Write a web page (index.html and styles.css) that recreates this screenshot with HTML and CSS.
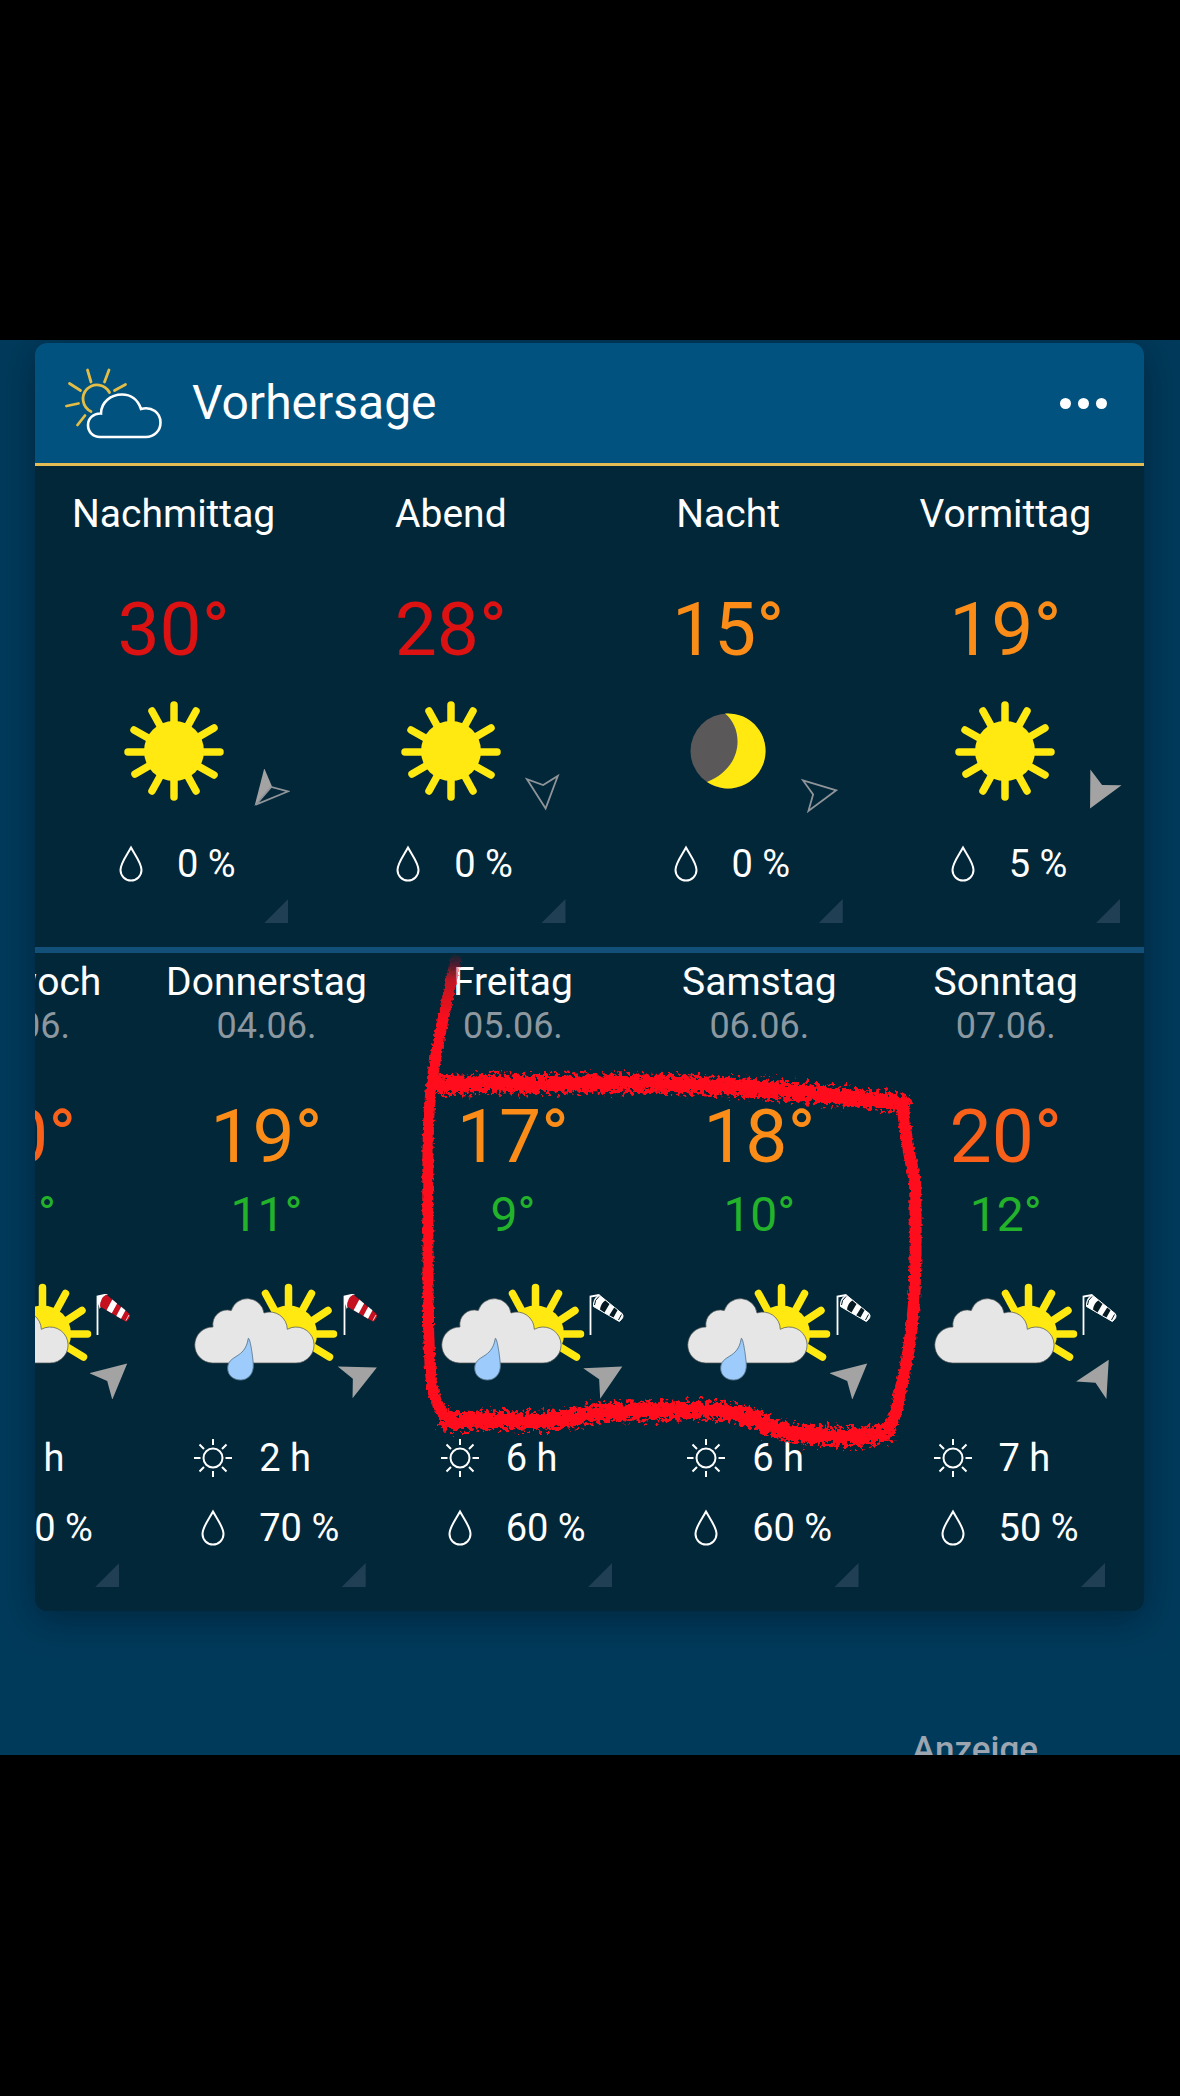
FILE: index.html
```
<!DOCTYPE html>
<html lang="de">
<head>
    <meta charset="UTF-8">
    <meta name="viewport" content="width=device-width, initial-scale=1.0">
    <title>Vorhersage</title>
    <link rel="stylesheet" href="styles.css">
</head>
<body>
    <!-- Symbole -->
    <svg class="sprite" aria-hidden="true">
        <symbol id="sun" viewBox="0 0 100 100">
            <circle cx="50" cy="50" r="30" fill="#ffe911"/>
            <g stroke="#ffe911" stroke-width="7.5" stroke-linecap="round">
                <path d="M50 4V96M4 51H96M28 10L72 90M72 10L28 90M10 29L90 74M90 27L11 73"/>
            </g>
        </symbol>
        <symbol id="moon" viewBox="0 0 100 100">
            <circle cx="50" cy="50" r="37.5" fill="#5a5858"/>
            <path d="M47 12.600C66 28 66 66 29 81A37.500 37.500 0 1 0 47 12.600Z" fill="#ffe911"/>
        </symbol>
        <symbol id="cloud-sun" viewBox="0 0 144 100">
            <circle cx="94.500" cy="52" r="28.500" fill="#ffe911"/>
            <path d="M94.500 26V5.500M108 29L117.500 11.500M118 39L134 28.500M121 52H139.500M119 65L135.500 75M81 29L71.500 11.500" stroke="#ffe911" stroke-width="7.500" stroke-linecap="round" fill="none"/>
            <path d="M18.500 81A18 18 0 0 1 19 45A14.500 14.500 0 0 1 37.300 28.500A16.800 16.800 0 0 1 70 31A17.500 17.500 0 0 1 93.300 47.300A18 18 0 1 1 101.500 81Z" fill="#e6e6e6" stroke="#4b5052" stroke-width="0.700"/>
        </symbol>
        <symbol id="raindrop" viewBox="0 0 144 100">
            <path d="M54.300 56.300C56 56 58.500 72 59.300 82C60 92 54 98 46.500 98C39 98 33.700 93 33.700 86.500C33.700 72 51 78 54.300 56.300Z" fill="#9ccbfc" stroke="#5a7890" stroke-width="0.900"/>
        </symbol>
        <symbol id="sock-red" viewBox="0 0 36 42">
            <path d="M1.500 41V2.500L10.300 .5L4 12.500L1.500 2.500" fill="#fff" stroke="#fff" stroke-width="1.800"/>
            <path d="M10.300 .5L33 19.500Q36 23 30.300 27.700L4 12.500Q4 4 10.300 .5Z" fill="#c4101f"/>
            <path d="M16.300 5.500L21.100 9.400L15.800 19.300L10.600 16.300ZM25.200 12.800L29.500 16.300L25 24.700L20.300 21.900Z" fill="#fff"/>
            <path d="M33 21L30 26.500" stroke="#fff" stroke-width="0.800"/>
        </symbol>
        <symbol id="sock-white" viewBox="0 0 36 42">
            <path d="M1.500 41V2.500L10.300 1" fill="none" stroke="#fff" stroke-width="1.800"/>
            <path d="M10.300 1L33 19.500Q36 23 30.300 27.500L4.500 12.500Q4 4 10.300 1Z" fill="#fff" stroke="#fff"/>
            <path d="M16.300 6.500L20.500 10L15.500 18.500L11 15.500Q12 9 16.300 6.500ZM25.200 13.500L28.500 16.300L24.500 23.500L20.300 21.200Z" fill="#061a24"/>
            <path d="M10 2.500Q5.500 6 5.500 11M32.500 20.500L29.500 26" stroke="#061a24" stroke-width="1" fill="none"/>
        </symbol>
        <symbol id="arrow" viewBox="0 0 48 48">
            <path d="M24 6.500L41.500 41.500L24 33L6.500 41.500Z" fill="#a3a3a3"/>
        </symbol>
        <symbol id="arrow-half" viewBox="0 0 48 48">
            <path d="M24 6.500L41.500 41.500L24 33Z" fill="#a3a3a3"/>
            <path d="M24 8.500L8.500 39.500L24 32Z" fill="none" stroke="#8f9499" stroke-width="1.800"/>
        </symbol>
        <symbol id="arrow-open" viewBox="0 0 48 48">
            <path d="M24 8.500L39.500 39.500L24 32L8.500 39.500Z" fill="none" stroke="#8f9499" stroke-width="1.800"/>
        </symbol>
        <symbol id="drop" viewBox="0 0 40 40">
            <path d="M20 3.500C24 11 30.500 19 30.500 26A10.500 10.500 0 0 1 9.500 26C9.500 19 16 11 20 3.500Z" fill="none" stroke="#fff" stroke-width="2"/>
        </symbol>
        <symbol id="sunshine" viewBox="0 0 40 40">
            <g fill="none" stroke="#fff" stroke-width="2">
                <circle cx="20" cy="20" r="9.500"/>
                <path d="M20 1V7M20 33V39M1 20H7.500M32.500 20H39M6.500 6.500L11 11M29 29L33.500 33.500M33.500 6.500L29 11M11 29L6.500 33.500"/>
            </g>
        </symbol>
    </svg>

    <main class="screen">
        <section class="card">
            <header class="card-header">
                <svg class="logo" viewBox="0 0 100 76" fill="none" stroke-linecap="round" aria-hidden="true">
                    <g stroke="#e3bd45" stroke-width="2.800">
                        <path d="M27 46.500A14 14 0 1 1 45.500 27.500"/>
                        <path d="M23.500 5L27 17M45 5L40.500 17M5.500 18.500L16.500 25.500M61.500 19.500L50.500 25.500M2.500 41L14.500 38.500M13.500 60L21 50.500"/>
                    </g>
                    <path d="M37 48.500C37 37 47 29.500 58 29.500C67 29.500 74 35 77 44C88 41 96.500 48 96.500 57.500C96.500 66 90 72 82 72H36C29 72 24 67 24 60C24 53.500 29.500 48 37 48.500Z" stroke="#fff" stroke-width="2.600"/>
                </svg>
                <h1>Vorhersage</h1>
                <button class="menu" type="button" aria-label="Menü">
                    <span class="dot"></span><span class="dot"></span><span class="dot"></span>
                </button>
            </header>

            <ul class="periods">
                <li class="slot">
                    <h2>Nachmittag</h2>
                    <div class="temp red">30°</div>
                    <div class="weather">
                        <svg class="picture"><use href="#sun"/></svg>
                        <div class="wind"><svg class="arrow" viewBox="0 0 48 48"><use href="#arrow-half" transform="rotate(221 24 24)"/></svg></div>
                    </div>
                    <div class="metric"><svg><use href="#drop"/></svg>0 %</div>
                </li>
                <li class="slot">
                    <h2>Abend</h2>
                    <div class="temp red">28°</div>
                    <div class="weather">
                        <svg class="picture"><use href="#sun"/></svg>
                        <div class="wind"><svg class="arrow" viewBox="0 0 48 48"><use href="#arrow-open" transform="rotate(174 24 24)"/></svg></div>
                    </div>
                    <div class="metric"><svg><use href="#drop"/></svg>0 %</div>
                </li>
                <li class="slot">
                    <h2>Nacht</h2>
                    <div class="temp amber">15°</div>
                    <div class="weather">
                        <svg class="picture"><use href="#moon"/></svg>
                        <div class="wind"><svg class="arrow" viewBox="0 0 48 48"><use href="#arrow-open" transform="rotate(80 24 24)"/></svg></div>
                    </div>
                    <div class="metric"><svg><use href="#drop"/></svg>0 %</div>
                </li>
                <li class="slot">
                    <h2>Vormittag</h2>
                    <div class="temp amber">19°</div>
                    <div class="weather">
                        <svg class="picture"><use href="#sun"/></svg>
                        <div class="wind"><svg class="arrow" viewBox="0 0 48 48"><use href="#arrow" transform="rotate(207 24 24)"/></svg></div>
                    </div>
                    <div class="metric"><svg><use href="#drop"/></svg>5 %</div>
                </li>
            </ul>

            <div class="days-wrap">
                <ul class="days">
                    <li class="slot">
                        <h2>Mittwoch</h2>
                        <div class="date">03.06.</div>
                        <div class="temp orange">20°</div>
                        <div class="low">11°</div>
                        <div class="weather">
                            <svg class="picture"><use href="#cloud-sun"/></svg>
                            <div class="wind">
                                <svg class="sock"><use href="#sock-red"/></svg>
                                <svg class="arrow" viewBox="0 0 48 48"><use href="#arrow" transform="rotate(49 24 24)"/></svg>
                            </div>
                        </div>
                        <div class="metric"><svg><use href="#sunshine"/></svg>5 h</div>
                        <div class="metric"><svg><use href="#drop"/></svg>50 %</div>
                    </li>
                    <li class="slot">
                        <h2>Donnerstag</h2>
                        <div class="date">04.06.</div>
                        <div class="temp amber">19°</div>
                        <div class="low">11°</div>
                        <div class="weather">
                            <svg class="picture"><use href="#cloud-sun"/><use href="#raindrop"/></svg>
                            <div class="wind">
                                <svg class="sock"><use href="#sock-red"/></svg>
                                <svg class="arrow" viewBox="0 0 48 48"><use href="#arrow" transform="rotate(65 24 24)"/></svg>
                            </div>
                        </div>
                        <div class="metric"><svg><use href="#sunshine"/></svg>2 h</div>
                        <div class="metric"><svg><use href="#drop"/></svg>70 %</div>
                    </li>
                    <li class="slot">
                        <h2>Freitag</h2>
                        <div class="date">05.06.</div>
                        <div class="temp amber">17°</div>
                        <div class="low">9°</div>
                        <div class="weather">
                            <svg class="picture"><use href="#cloud-sun"/><use href="#raindrop"/></svg>
                            <div class="wind">
                                <svg class="sock"><use href="#sock-white"/></svg>
                                <svg class="arrow" viewBox="0 0 48 48"><use href="#arrow" transform="rotate(61 24 24)"/></svg>
                            </div>
                        </div>
                        <div class="metric"><svg><use href="#sunshine"/></svg>6 h</div>
                        <div class="metric"><svg><use href="#drop"/></svg>60 %</div>
                    </li>
                    <li class="slot">
                        <h2>Samstag</h2>
                        <div class="date">06.06.</div>
                        <div class="temp amber">18°</div>
                        <div class="low">10°</div>
                        <div class="weather">
                            <svg class="picture"><use href="#cloud-sun"/><use href="#raindrop"/></svg>
                            <div class="wind">
                                <svg class="sock"><use href="#sock-white"/></svg>
                                <svg class="arrow" viewBox="0 0 48 48"><use href="#arrow" transform="rotate(49 24 24)"/></svg>
                            </div>
                        </div>
                        <div class="metric"><svg><use href="#sunshine"/></svg>6 h</div>
                        <div class="metric"><svg><use href="#drop"/></svg>60 %</div>
                    </li>
                    <li class="slot">
                        <h2>Sonntag</h2>
                        <div class="date">07.06.</div>
                        <div class="temp orange">20°</div>
                        <div class="low">12°</div>
                        <div class="weather">
                            <svg class="picture"><use href="#cloud-sun"/></svg>
                            <div class="wind">
                                <svg class="sock"><use href="#sock-white"/></svg>
                                <svg class="arrow" viewBox="0 0 48 48"><use href="#arrow" transform="rotate(30 24 24)"/></svg>
                            </div>
                        </div>
                        <div class="metric"><svg><use href="#sunshine"/></svg>7 h</div>
                        <div class="metric"><svg><use href="#drop"/></svg>50 %</div>
                    </li>
                </ul>

                <!-- Markierung mit dem Stift -->
                <svg class="marker" viewBox="0 0 1109 656" aria-hidden="true">
                    <defs>
                        <filter id="rough" filterUnits="userSpaceOnUse" x="350" y="-10" width="580" height="520">
                            <feTurbulence type="fractalNoise" baseFrequency="0.24" numOctaves="3" seed="4"/>
                            <feDisplacementMap in="SourceGraphic" scale="20" xChannelSelector="R" yChannelSelector="G"/>
                        </filter>
                        <filter id="rough-fine" filterUnits="userSpaceOnUse" x="350" y="-10" width="580" height="520">
                            <feTurbulence type="fractalNoise" baseFrequency="0.3" numOctaves="2" seed="9"/>
                            <feDisplacementMap in="SourceGraphic" scale="5" xChannelSelector="R" yChannelSelector="G"/>
                        </filter>
                        <linearGradient id="fade" gradientUnits="userSpaceOnUse" x1="0" y1="0" x2="0" y2="70">
                            <stop offset="0" stop-color="#ff0f1b" stop-opacity="0"/>
                            <stop offset="0.400" stop-color="#ff0f1b" stop-opacity="0.750"/>
                            <stop offset="1" stop-color="#ff0f1b"/>
                        </linearGradient>
                    </defs>
                    <g fill="none" stroke-linejoin="round">
                        <path d="M422 2C417 22 412 48 406 76C400 105 396 130 394 160C392 200 393 260 393 310C393 350 393 390 396 425C398 445 403 456 412 464" stroke="url(#fade)" stroke-width="11" filter="url(#rough-fine)"/>
                        <path d="M868 146C868 170 873 195 880 229C881 270 881 310 879 350C876 390 869 425 864 444C862 458 859 470 851 478" stroke="#ff0f1b" stroke-width="12" filter="url(#rough-fine)"/>
                        <path d="M399 132C430 133 460 129 500 131C560 130 620 130 665 132C710 134 745 137 790 142C820 145 850 148 874 151" stroke="#ff0f1b" stroke-width="18" filter="url(#rough)"/>
                        <path d="M406 467C430 470 460 465 490 468C520 469 550 462 580 458C605 459 630 459 660 456C690 459 705 459 728 470C745 479 760 482 785 482C810 485 840 486 857 476" stroke="#ff0f1b" stroke-width="18" filter="url(#rough)"/>
                    </g>
                </svg>
            </div>
        </section>

        <div class="ad">Anzeige</div>
    </main>
</body>
</html>
```

FILE: styles.css
```
* {
    box-sizing: border-box;
}
body {
    margin: 0;
    padding: 340px 0;
    background-color: #000;
    color: #fff;
    font-family: Roboto, 'Noto Sans', sans-serif;
    font-size: 38px;
    line-height: 48px;
}
h1, h2, ul {
    margin: 0;
    padding: 0;
    font-weight: 400;
}
ul {
    list-style: none;
    display: flex;
}
svg {
    display: block;
    flex: none;
}
.sprite {
    position: absolute;
    width: 0;
    height: 0;
}
.screen {
    padding: 3px 36px 0 35px;
    background-color: #003a5b;
    overflow: hidden;
}
.card {
    border-radius: 12px;
    background-color: #022739;
    box-shadow: 0 8px 36px rgba(0, 10, 20, 0.4);
    overflow: hidden;
}
.card-header {
    display: flex;
    align-items: center;
    gap: 28px;
    height: 123px;
    padding: 0 29px;
    background-color: #01527f;
    border-bottom: 3px solid #e3bd54;
}
.logo {
    width: 100px;
    height: 76px;
}
h1 {
    font-size: 48px;
}
h2 {
    font-size: 39px;
    text-align: center;
}
.menu {
    display: flex;
    justify-content: center;
    gap: 7px;
    margin-left: auto;
    padding: 16px 8px;
    border: none;
    background: none;
    cursor: pointer;
}
.dot {
    width: 11px;
    height: 11px;
    border-radius: 50%;
    background-color: #fff;
}
.slot {
    position: relative;
    flex: none;
}
/* kleine Ecke unten rechts in jeder Spalte */
.slot::after {
    content: '';
    position: absolute;
    right: 24px;
    bottom: 24px;
    width: 24px;
    height: 24px;
    background-color: #203f54;
    clip-path: polygon(100% 0, 100% 100%, 0 100%);
}
.temp {
    font-size: 75px;
    line-height: 88px;
    text-align: center;
}
.red {
    color: #dc1212;
}
.orange {
    color: #f9601a;
}
.amber {
    color: #fa8c17;
}
.weather {
    position: relative;
    display: flex;
    justify-content: center;
}
.picture {
    width: 100px;
    height: 100px;
}
.wind {
    position: absolute;
    display: flex;
    flex-direction: column;
    align-items: center;
    gap: 15px;
}
.arrow {
    width: 48px;
    height: 48px;
}
.sock {
    width: 36px;
    height: 42px;
}
.metric {
    display: flex;
    align-items: center;
    gap: 26px;
}
.metric svg {
    width: 40px;
    height: 40px;
}

.periods {
    border-bottom: 6px solid #135079;
}
.periods .slot {
    width: 25%;
    padding: 24px 0 59px;
}
.periods .temp {
    margin: 47px 0 28px;
}
.periods .wind {
    right: 22px;
    bottom: -16px;
}
.periods .metric {
    margin-top: 39px;
    padding-left: 76px;
}

.days-wrap {
    position: relative;
}
/* viereinhalb Tage sind sichtbar, der Rest wird links abgeschnitten */
.days {
    justify-content: flex-end;
    margin-right: 15px;
}
.days .slot {
    width: calc((100% + 15px) / 4.5);
    padding: 5px 0 59px;
}
.date {
    color: #8c979f;
    font-size: 36px;
    line-height: 40px;
    text-align: center;
}
.days .temp {
    margin: 46px 0 7px;
}
.low {
    margin-bottom: 39px;
    color: #22b32a;
    font-size: 48px;
    line-height: 56px;
    text-align: center;
}
.days .picture {
    width: 144px;
}
.days .wind {
    top: 12px;
    right: 5px;
}
.days .metric {
    margin-top: 22px;
    padding-left: 50px;
}
.days .weather + .metric {
    margin-top: 52px;
}
.marker {
    position: absolute;
    top: 0;
    left: 0;
    width: 100%;
    pointer-events: none;
}

.ad {
    height: 144px;
    padding: 115px 106px 0 0;
    overflow: hidden;
    color: #9ca5b0;
    font-size: 35px;
    font-weight: 500;
    text-align: right;
}
```
